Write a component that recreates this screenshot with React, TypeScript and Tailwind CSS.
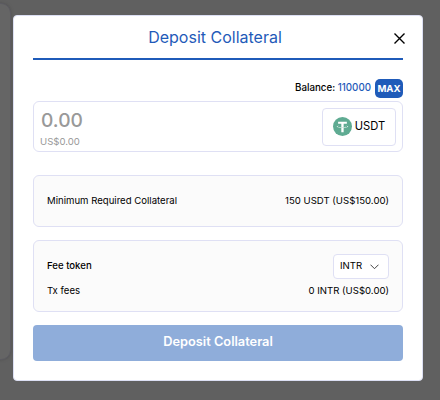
import React from "react";

function TetherIcon() {
  return (
    <svg width="19" height="19" viewBox="0 0 32 32" className="shrink-0">
      <circle cx="16" cy="16" r="16" fill="#5fab92" />
      <path
        fill="#fff"
        d="M17.92 17.38c-.11.01-.68.04-1.94.04-1.01 0-1.72-.03-1.97-.04-3.89-.17-6.79-.85-6.79-1.66s2.9-1.49 6.79-1.66v2.64c.25.02.98.06 1.99.06 1.2 0 1.81-.05 1.92-.06v-2.64c3.88.17 6.77.85 6.77 1.66s-2.9 1.48-6.77 1.66m0-3.59v-2.37h5.41V7.82H8.6v3.6h5.41v2.36c-4.4.2-7.71 1.07-7.71 2.12s3.31 1.91 7.71 2.12v7.56h3.91v-7.57c4.39-.2 7.69-1.07 7.69-2.11s-3.3-1.91-7.69-2.11"
      />
    </svg>
  );
}

function Row({ label, children }: { label: React.ReactNode; children: React.ReactNode }) {
  return (
    <div className="flex items-center justify-between">
      <span>{label}</span>
      {children}
    </div>
  );
}

export default function App() {
  return (
    <div className="relative h-[400px] w-[440px] overflow-hidden bg-[#606060] pt-[15px] pl-[13px] font-['Inter',sans-serif] text-[9.6px] leading-[14px] text-black">
      <div className="absolute top-[3px] -left-5 h-[357px] w-[31px] rounded-[10px] border border-[#5c5b62] bg-[#656565] shadow-[0_0_3px_#505050]" />
      <div className="relative h-[366px] w-[410px] rounded-[4px] border border-[#dcdff3] bg-white px-[19px]">
        <header className="relative flex h-[44px] items-center justify-center border-b-2 border-[#1f5bb9] pr-[6px]">
          <h2 className="text-[16px] leading-6 text-[#1f5bb9]">Deposit Collateral</h2>
          <button className="absolute top-[17px] -right-[2px]" aria-label="Close">
            <svg width="11" height="11" viewBox="0 0 11 11" stroke="#000" strokeWidth="1.4">
              <path d="M.5.5l10 10M10.5.5l-10 10" />
            </svg>
          </button>
        </header>

        <div className="mt-[19px] flex h-[19px] items-center justify-end font-medium">
          <span className="pb-[2px] text-[9.75px]">
            Balance: <span className="text-[#1f5bb9]">110000</span>
          </span>
          <button className="ml-1 h-[19px] w-7 rounded-[5px] bg-[#1f5bb9] text-center text-[9.6px] font-bold text-white">MAX</button>
        </div>

        <div className="mt-[3px] flex h-[51px] items-center justify-between rounded-[6px] border border-[#dfe0f4] pr-[6px] pl-[6px]">
          <div className="pt-[5px] text-[#999]">
            <div className="pl-px text-[19.2px] leading-6 font-medium">0.00</div>
            <div className="h-[18px] pt-px leading-[18px]">US$0.00</div>
          </div>
          <div className="flex h-[38px] w-[74px] items-center justify-center gap-[3px] rounded-[4px] border border-[#dfe0f4] text-[11.2px]">
            <TetherIcon />
            <span className="pb-[2px]">USDT</span>
          </div>
        </div>

        <section className="mt-[23px] h-[52px] rounded-[6px] border border-[#dfe0f4] bg-[#fbfbfb] px-[13px] pt-[18px]">
          <Row label="Minimum Required Collateral">
            <span>150 USDT (US$150.00)</span>
          </Row>
        </section>

        <section className="mt-[13px] h-[72px] rounded-[6px] border border-[#dfe0f4] bg-[#fbfbfb] px-[13px] pt-[13px]">
          <Row label={<span className="block pb-[2px] font-medium">Fee token</span>}>
            <div className="flex h-[25px] w-14 items-center justify-between rounded-[4px] border border-[#dfe0f4] bg-white pr-[9px] pl-[6px]">
              <span className="pb-[2px]">INTR</span>
              <svg width="9" height="6" viewBox="0 0 9 6" fill="none" stroke="#444" strokeWidth="1">
                <path d="M.5.7l4 4 4-4" />
              </svg>
            </div>
          </Row>
          <div className="mt-[5px]">
            <Row label="Tx fees">
              <span>0 INTR (US$0.00)</span>
            </Row>
          </div>
        </section>

        <button className="mt-[13px] block h-9 w-full rounded-[4px] bg-[#8fadda] pb-[3px] text-[12.8px] font-semibold text-white">
          Deposit Collateral
        </button>
      </div>
    </div>
  );
}
